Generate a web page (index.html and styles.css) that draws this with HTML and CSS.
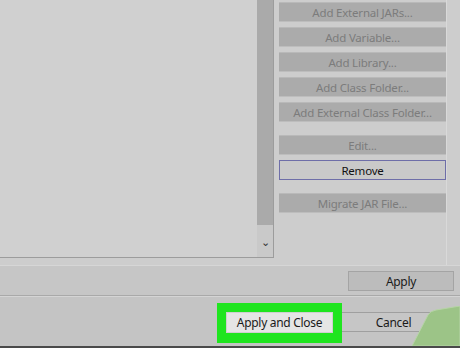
FILE: index.html
```html
<!DOCTYPE html>
<html lang="en">

<head>
    <meta charset="UTF-8">
    <title>Java Build Path</title>
    <link rel="stylesheet" href="styles.css">
</head>

<body>
    <div class="dialog">
        <div class="main">
            <div class="list">
                <div class="entries"></div>
                <div class="scrollbar">
                    <div class="thumb"></div>
                    <div class="arrow">&#x2304;</div>
                </div>
            </div>
            <div class="buttons">
                <div class="btn off">Add External JARs...</div>
                <div class="btn off">Add Variable...</div>
                <div class="btn off">Add Library...</div>
                <div class="btn off">Add Class Folder...</div>
                <div class="btn off">Add External Class Folder...</div>
                <div class="btn off spaced">Edit...</div>
                <div class="btn remove">Remove</div>
                <div class="btn off spaced">Migrate JAR File...</div>
            </div>
        </div>
        <div class="apply-row">
            <div class="btn apply">Apply</div>
        </div>
        <div class="footer">
            <div class="highlight">
                <div class="btn close">Apply and Close</div>
            </div>
            <div class="btn cancel">Cancel</div>
        </div>
        <svg class="badge" width="48" height="40" viewBox="0 0 48 40">
            <path d="M16 9 Q18 5 24 4 L48 0 L48 40 L0 40 Z" fill="#9cc487" stroke="#b6d4a6" stroke-width="1" />
        </svg>
    </div>
</body>

</html>
```

FILE: styles.css
```css
body {
    margin: 0;
    font-family: 'Noto Sans', 'Open Sans', sans-serif;
    font-size: 11.5px;
    letter-spacing: -0.2px;
    background: #cdcdcd;
}

.dialog {
    position: relative;
    width: 460px;
    height: 348px;
    overflow: hidden;
    background: #cdcdcd;
    border-bottom: 2px solid #4a4a4a;
    box-sizing: border-box;
}

.main {
    display: flex;
    height: 265px;
}

.list {
    display: flex;
    width: 273px;
    height: 257px;
    background: #d0d0d0;
    border-right: 1px solid #9c9c9c;
    border-bottom: 1px solid #9c9c9c;
}

.entries {
    flex: 1;
}

.scrollbar {
    width: 16px;
    background: #c9c9c9;
    display: flex;
    flex-direction: column;
}

.thumb {
    height: 225px;
    background: #aaaaaa;
}

.arrow {
    text-align: center;
    margin-top: 12px;
    font-size: 11px;
    line-height: 10px;
    color: #333;
}

.buttons {
    display: flex;
    flex-direction: column;
    gap: 5px;
    padding: 2px 0 0 5px;
    width: 167px;
    border-right: 1px solid #d9d9d9;
}

.btn {
    height: 20px;
    line-height: 19px;
    text-align: center;
    box-sizing: border-box;
    user-select: none;
}

.off {
    background: #ababab;
    color: #7c7c7c;
    border-top: 1px solid #b9b9b9;
    border-bottom: 1px solid #bdbdbd;
}

.spaced {
    margin-top: 8px;
}

.remove {
    background: #c9c9c9;
    color: #111;
    border: 1px solid #6e6ea8;
}

.apply-row {
    height: 31px;
    background: #c6c6c6;
    border-top: 1px solid #d6d6d6;
    border-bottom: 1px solid #a9a9a9;
    display: flex;
    justify-content: flex-end;
    align-items: flex-start;
    padding: 5px 6px 0 0;
    box-sizing: border-box;
}

.apply,
.close,
.cancel {
    font-size: 12px;
    letter-spacing: -0.3px;
    color: #1a1a1a;
}

.apply {
    width: 106px;
    background: #bcbcbc;
    border: 1px solid #a4a4a4;
}

.footer {
    display: flex;
    align-items: flex-start;
    padding: 6px 0 0 217px;
    height: 50px;
    box-sizing: border-box;
    background: #c4c4c4;
    border-top: 1px solid #d4d4d4;
}

.highlight {
    background: #1fe51f;
    padding: 9px;
    width: 125px;
    height: 40px;
    box-sizing: border-box;
}

.close {
    width: 107px;
    height: 21px;
    line-height: 20px;
    background: #e5e5e5;
    border: 1px solid #cfcfcf;
}

.cancel {
    margin-top: 9px;
    width: 104px;
    background: #c6c6c6;
    border: 1px solid #9f9f9f;
    border-left: none;
}

.badge {
    position: absolute;
    right: 0;
    bottom: 0;
}
```
